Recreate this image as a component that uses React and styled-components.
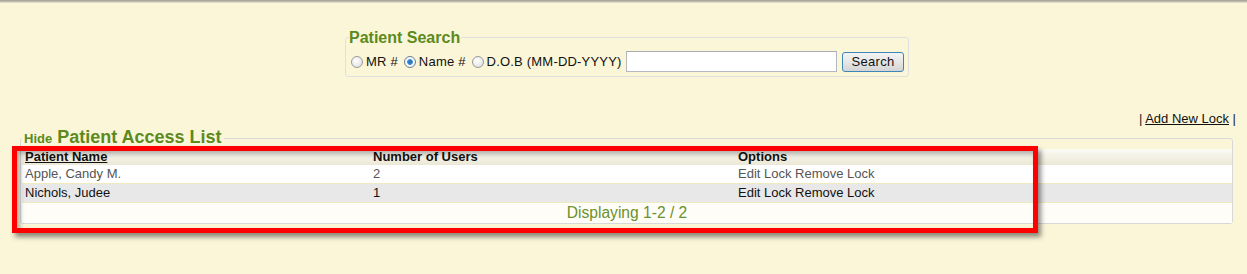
import React from 'react';
import styled, {createGlobalStyle} from 'styled-components';

const Global = createGlobalStyle`
  html, body {
    margin: 0;
    padding: 0;
    background: #fcf6d9;
  }
  body {
    font-family: "Liberation Sans", Arial, sans-serif;
    font-size: 13px;
    color: #111;
  }
`

const Page = styled.div`
  position: relative;
  width: 1247px;
  height: 274px;
  overflow: hidden;
`

const TopBar = styled.div`
  height: 3px;
  background: linear-gradient(#9c9a90, #c9c5b4 60%, #ece7cd);
`

const SearchBox = styled.fieldset`
  box-sizing: border-box;
  width: 564px;
  margin: 25px 0 0 345px;
  padding: 4px 4px 4px 3px;
  border: 1px solid #dfe1e0;
  border-radius: 3px;
`

const Legend = styled.legend`
  padding: 0 1px 0 0;
  line-height: 19px;
  font-size: 16px;
  font-weight: bold;
  color: #5b8a1d;
`

const SearchRow = styled.div`
  display: flex;
  align-items: center;
  height: 21px;
`

const Choice = styled.label`
  display: inline-flex;
  align-items: center;
  margin-right: 4px;
  white-space: nowrap;
  font-size: 13px;
  letter-spacing: 0.2px;
`

const Radio = styled.input.attrs({type: 'radio'})`
  appearance: none;
  box-sizing: border-box;
  width: 12px;
  height: 12px;
  margin: 0 3px 0 2px;
  border: 1px solid #9a9a9a;
  border-radius: 50%;
  background: radial-gradient(circle at 40% 35%, #ffffff, #dcdcdc);

  &:checked {
    border-color: #6a7f93;
    background: radial-gradient(circle at 50% 50%, #1e6fb8 0, #3a8bd2 2.5px, #ffffff 3.2px, #e4e4e4 100%);
  }
`

const TextInput = styled.input`
  box-sizing: border-box;
  flex: 1;
  height: 21px;
  margin: 0 5px 0 0;
  padding: 0 3px;
  border: 1px solid #b4b9c0;
  border-top-color: #a9adb3;
  background: #fff;
`

const Button = styled.button`
  box-sizing: border-box;
  width: 62px;
  height: 20px;
  padding: 0;
  border: 1px solid #3b87b8;
  border-radius: 3px;
  background: linear-gradient(#f4f4f4, #e6e6e6 50%, #d4d4d4);
  font-family: "Liberation Sans", Arial, sans-serif;
  font-size: 13px;
  letter-spacing: 0.3px;
  color: #111;
`

const LinkRow = styled.div`
  margin-top: 34px;
  padding-right: 11px;
  text-align: right;
  line-height: 15px;
  font-size: 13px;
  color: #222;

  a {
    color: #111;
    text-decoration: underline;
  }
`

const ListBox = styled.fieldset`
  margin: 1px 14px 0 20px;
  padding: 0 0 0 1px;
  border: 1px solid #d7d9d8;
  border-radius: 3px;
`

const ListLegend = styled.legend`
  padding: 0 2px;
  line-height: 20px;
  color: #5b8a1d;
  font-weight: bold;
`

const Hide = styled.span`
  font-size: 13px;
  margin-right: 5px;
`

const Title = styled.span`
  font-size: 18px;
`

const Table = styled.table`
  width: 100%;
  border-collapse: collapse;
  font-size: 13px;
`

const Head = styled.th`
  width: ${p => p.$w || 'auto'};
  height: 16px;
  padding: 0 3px;
  text-align: left;
  font-weight: bold;
  line-height: 16px;
  background: linear-gradient(#fbfaf4, #ece8d6);
  text-decoration: ${p => p.$link ? 'underline' : 'none'};
`

const Row = styled.tr`
  background: ${p => p.$alt ? '#e8e8e8' : '#ffffff'};
  color: ${p => p.$alt ? '#111' : '#555'};
`

const Cell = styled.td`
  height: 18px;
  padding: 0 3px;
  line-height: 18px;
  border-bottom: 1px solid #efebbf;
`

const Footer = styled.td`
  height: 20px;
  padding: 0;
  text-align: center;
  font-size: 15.6px;
  color: #6a912c;
  background: #fffdf7;
`

const Marker = styled.div`
  position: absolute;
  left: 12px;
  top: 146px;
  width: 1026px;
  height: 87px;
  box-sizing: border-box;
  border: 5px solid #ff0000;
  box-shadow: 3px 4px 5px rgba(0, 0, 0, 0.45), inset 3px 3px 5px rgba(0, 0, 0, 0.3);
  pointer-events: none;
`

const patients = [
    {name: 'Apple, Candy M.', users: 2},
    {name: 'Nichols, Judee', users: 1},
]

export default function App() {
    return (
        <Page>
            <Global/>
            <TopBar/>
            <SearchBox>
                <Legend>Patient Search</Legend>
                <SearchRow>
                    <Choice><Radio name="by"/>MR #</Choice>
                    <Choice><Radio name="by" defaultChecked/>Name #</Choice>
                    <Choice><Radio name="by"/>D.O.B (MM-DD-YYYY)</Choice>
                    <TextInput type="text"/>
                    <Button>Search</Button>
                </SearchRow>
            </SearchBox>

            <LinkRow>| <a href="#">Add New Lock</a> |</LinkRow>

            <ListBox>
                <ListLegend><Hide>Hide</Hide><Title>Patient Access List</Title></ListLegend>
                <Table>
                    <thead>
                    <tr>
                        <Head $w="342px" $link>Patient Name</Head>
                        <Head $w="359px">Number of Users</Head>
                        <Head>Options</Head>
                    </tr>
                    </thead>
                    <tbody>
                    {patients.map((p, i) => (
                        <Row key={p.name} $alt={i % 2 === 1}>
                            <Cell>{p.name}</Cell>
                            <Cell>{p.users}</Cell>
                            <Cell>Edit Lock Remove Lock</Cell>
                        </Row>
                    ))}
                    <tr>
                        <Footer colSpan={3}>Displaying 1-2 / 2</Footer>
                    </tr>
                    </tbody>
                </Table>
            </ListBox>

            <Marker/>
        </Page>
    );
}
